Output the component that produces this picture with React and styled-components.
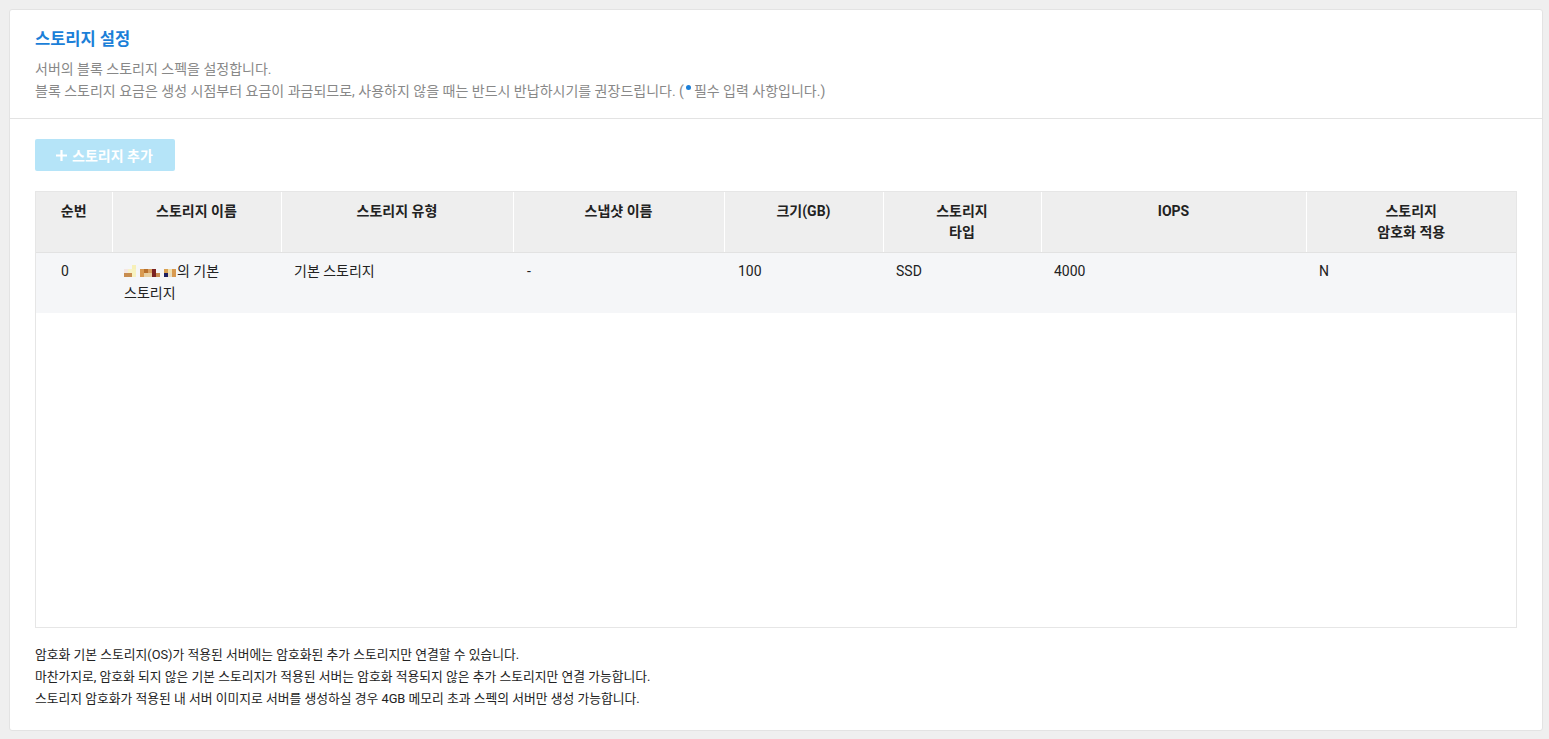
import styled, { createGlobalStyle } from 'styled-components'

const GlobalStyle = createGlobalStyle`
  html, body {
    margin: 0;
    padding: 0;
    background: #efefef;
    font-family: Roboto, "Noto Sans CJK KR", sans-serif;
    color: #222;
  }
`

const Page = styled.div`
  padding: 9px 6px 10px 9px;
`

const Card = styled.div`
  background: #fff;
  border: 1px solid #e3e3e3;
  border-radius: 3px;
`

const Header = styled.div`
  padding: 18px 25px 16px;
  border-bottom: 1px solid #e3e3e3;
`

const Title = styled.h2`
  margin: 0 0 6px;
  font-size: 16.5px;
  font-weight: 700;
  color: #1b7fd8;
  line-height: 24px;
`

const Desc = styled.p`
  margin: 0;
  font-size: 14px;
  line-height: 22px;
  color: #888;
`

const Dot = styled.span`
  display: inline-block;
  width: 5px;
  height: 5px;
  border-radius: 50%;
  background: #1b7fd8;
  vertical-align: 6px;
  margin: 0 3px 0 2px;
`

const Body = styled.div`
  padding: 20px 25px 20px;
`

const AddButton = styled.button`
  display: inline-flex;
  align-items: center;
  gap: 4px;
  height: 32px;
  width: 140px;
  padding: 0 0 0 20px;
  border: none;
  border-radius: 2px;
  background: #b5e4f8;
  color: #fff;
  font-family: inherit;
  font-size: 14px;
  font-weight: 700;
  cursor: default;
`

const TableWrap = styled.div`
  margin-top: 20px;
  height: 437px;
  border: 1px solid #e6e6e6;
  box-sizing: border-box;
`

const Table = styled.table`
  width: 100%;
  border-collapse: collapse;
  table-layout: fixed;
`

const Th = styled.th`
  background: #eeeeee;
  height: 60px;
  box-sizing: border-box;
  padding: 9px 8px 0;
  vertical-align: top;
  font-size: 14px;
  font-weight: 700;
  line-height: 21px;
  color: #222;
  border-left: 1px solid #fff;
  border-bottom: 1px solid #e2e2e2;
  &:first-child { border-left: none; }
`

const Td = styled.td`
  background: #f5f6f8;
  height: 61px;
  box-sizing: border-box;
  padding: 7px 8px 0 ${p => p.$pl || 13}px;
  vertical-align: top;
  font-size: 14px;
  line-height: 22px;
  color: #222;
`

const Notes = styled.div`
  margin-top: 16px;
  font-size: 12.8px;
  line-height: 22px;
  color: #222;
`

const columns = [
  { title: '순번', width: 76 },
  { title: '스토리지 이름', width: 169 },
  { title: '스토리지 유형', width: 232 },
  { title: '스냅샷 이름', width: 211 },
  { title: '크기(GB)', width: 159 },
  { title: ['스토리지', '타입'], width: 158 },
  { title: 'IOPS', width: 265 },
  { title: ['스토리지', '암호화 적용'] },
]

// pixelated (masked) owner name: [col, row, colour]
const pixels = [
  [0, 1, '#f5e6e2'], [0, 2, '#c88d50'],
  [1, 1, '#f7f2c8'], [1, 2, '#c88d50'],
  [2, 0, '#f7f0b8'], [2, 1, '#f7f2c0'], [2, 2, '#f7f2c0'],
  [4, 1, '#d99a50'], [4, 2, '#d99a50'],
  [5, 1, '#b8702c'], [5, 2, '#e8cfa0'],
  [6, 1, '#d9a060'], [6, 2, '#e8d0a0'],
  [7, 1, '#7a2222'], [7, 2, '#7a2222'],
  [8, 2, '#c88d50'],
  [10, 1, '#d9a050'], [10, 2, '#1e2060'],
  [11, 1, '#f0e0b0'], [11, 2, '#e8dcc0'],
  [12, 1, '#d99a50'], [12, 2, '#d99a50'],
]

const Redacted = () => (
  <svg width="53" height="12" viewBox="0 0 53 12" style={{ verticalAlign: -1 }}>
    {pixels.map(([x, y, c], i) => (
      <rect key={i} x={x * 4} y={y * 4} width="4" height="4" fill={c} />
    ))}
  </svg>
)

const App = () => {
  return (
    <Page>
      <GlobalStyle />
      <Card>
        <Header>
          <Title>스토리지 설정</Title>
          <Desc>서버의 블록 스토리지 스펙을 설정합니다.</Desc>
          <Desc>
            블록 스토리지 요금은 생성 시점부터 요금이 과금되므로, 사용하지 않을 때는 반드시 반납하시기를 권장드립니다. (<Dot />필수 입력 사항입니다.)
          </Desc>
        </Header>
        <Body>
          <AddButton>
            <svg width="13" height="13" viewBox="0 0 13 13">
              <path d="M6.5 1v11M1 6.5h11" stroke="#fff" strokeWidth="2.2" />
            </svg>
            스토리지 추가
          </AddButton>
          <TableWrap>
            <Table>
              <colgroup>
                {columns.map((c, i) => <col key={i} style={c.width ? { width: c.width } : undefined} />)}
              </colgroup>
              <thead>
                <tr>
                  {columns.map((c, i) => (
                    <Th key={i}>
                      {Array.isArray(c.title) ? <>{c.title[0]}<br />{c.title[1]}</> : c.title}
                    </Th>
                  ))}
                </tr>
              </thead>
              <tbody>
                <tr>
                  <Td $pl={25}>0</Td>
                  <Td $pl={12}><Redacted />의 기본<br />스토리지</Td>
                  <Td>기본 스토리지</Td>
                  <Td $pl={14}>-</Td>
                  <Td $pl={14}>100</Td>
                  <Td>SSD</Td>
                  <Td>4000</Td>
                  <Td>N</Td>
                </tr>
              </tbody>
            </Table>
          </TableWrap>
          <Notes>
            <div>암호화 기본 스토리지(OS)가 적용된 서버에는 암호화된 추가 스토리지만 연결할 수 있습니다.</div>
            <div>마찬가지로, 암호화 되지 않은 기본 스토리지가 적용된 서버는 암호화 적용되지 않은 추가 스토리지만 연결 가능합니다.</div>
            <div>스토리지 암호화가 적용된 내 서버 이미지로 서버를 생성하실 경우 4GB 메모리 초과 스펙의 서버만 생성 가능합니다.</div>
          </Notes>
        </Body>
      </Card>
    </Page>
  )
}

export default App
